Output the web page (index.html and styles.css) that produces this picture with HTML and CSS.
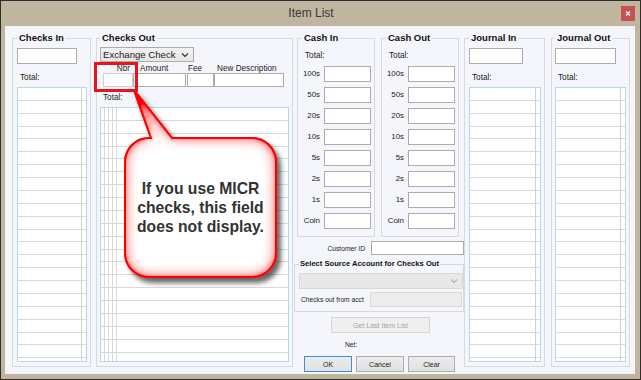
FILE: index.html
```html
<!DOCTYPE html>
<html lang="en">
<head>
    <meta charset="UTF-8">
    <title>Item List</title>
    <link rel="stylesheet" href="styles.css">
</head>
<body>
    <div class="window">
        <div class="titlebar">
            <span class="title">Item List</span>
            <span class="close">
                <svg width="14" height="15" viewBox="0 0 14 15"><path d="M5 5.5 L9 9.5 M9 5.5 L5 9.5" stroke="#fff" stroke-width="1.3"/></svg>
            </span>
        </div>

        <div class="client">
            <fieldset class="group checks-in">
                <legend>Checks In</legend>
                <div class="input in-box"></div>
                <div class="label total">Total:</div>
                <div class="list"></div>
            </fieldset>

            <fieldset class="group checks-out">
                <legend>Checks Out</legend>
                <div class="combo">
                    <span>Exchange Check</span>
                    <svg width="8" height="6" viewBox="0 0 8 6"><path d="M1 1.5 L4 4.5 L7 1.5" fill="none" stroke="#333" stroke-width="1.2"/></svg>
                </div>
                <div class="entry">
                    <div class="field f-nbr"><span class="label">Nbr</span><div class="input soft"></div></div>
                    <div class="field f-amount"><span class="label">Amount</span><div class="input"></div></div>
                    <div class="field f-fee"><span class="label">Fee</span><div class="input"></div></div>
                    <div class="field f-desc"><span class="label">New Description</span><div class="input"></div></div>
                </div>
                <div class="label total out-total">Total:</div>
                <div class="grid"></div>
            </fieldset>

            <div class="middle">
                <div class="cash-row">
                    <fieldset class="group cash">
                        <legend>Cash In</legend>
                        <div class="label cash-total">Total:</div>
                        <div class="denom"><span>100s</span><div class="input"></div></div>
                        <div class="denom"><span>50s</span><div class="input"></div></div>
                        <div class="denom"><span>20s</span><div class="input"></div></div>
                        <div class="denom"><span>10s</span><div class="input"></div></div>
                        <div class="denom"><span>5s</span><div class="input"></div></div>
                        <div class="denom"><span>2s</span><div class="input"></div></div>
                        <div class="denom"><span>1s</span><div class="input"></div></div>
                        <div class="denom"><span>Coin</span><div class="input"></div></div>
                    </fieldset>
                    <fieldset class="group cash">
                        <legend>Cash Out</legend>
                        <div class="label cash-total">Total:</div>
                        <div class="denom"><span>100s</span><div class="input"></div></div>
                        <div class="denom"><span>50s</span><div class="input"></div></div>
                        <div class="denom"><span>20s</span><div class="input"></div></div>
                        <div class="denom"><span>10s</span><div class="input"></div></div>
                        <div class="denom"><span>5s</span><div class="input"></div></div>
                        <div class="denom"><span>2s</span><div class="input"></div></div>
                        <div class="denom"><span>1s</span><div class="input"></div></div>
                        <div class="denom"><span>Coin</span><div class="input"></div></div>
                    </fieldset>
                </div>

                <div class="customer">
                    <span class="small">Customer ID</span>
                    <div class="input customer-box"></div>
                </div>

                <fieldset class="group source">
                    <legend>Select Source Account for Checks Out</legend>
                    <div class="combo disabled">
                        <svg width="8" height="6" viewBox="0 0 8 6"><path d="M1 1.5 L4 4.5 L7 1.5" fill="none" stroke="#b5b5b5" stroke-width="1.2"/></svg>
                    </div>
                    <div class="acct">
                        <span class="small">Checks out from acct</span>
                        <div class="input disabled acct-box"></div>
                    </div>
                </fieldset>

                <div class="btn btn-disabled get-last">Get Last Item List</div>
                <div class="small net">Net:</div>
                <div class="buttons">
                    <div class="btn btn-default">OK</div>
                    <div class="btn">Cancel</div>
                    <div class="btn btn-clear">Clear</div>
                </div>
            </div>

            <fieldset class="group journal journal-in">
                <legend>Journal In</legend>
                <div class="input j-box"></div>
                <div class="label total">Total:</div>
                <div class="list"></div>
            </fieldset>

            <fieldset class="group journal journal-out">
                <legend>Journal Out</legend>
                <div class="input j-box"></div>
                <div class="label total">Total:</div>
                <div class="list"></div>
            </fieldset>
        </div>

        <!-- callout annotation drawn over the form -->
        <svg class="annotation" width="641" height="380" viewBox="0 0 641 380">
            <defs>
                <filter id="bubble" x="-15%" y="-10%" width="135%" height="125%">
                    <feGaussianBlur in="SourceAlpha" stdDeviation="2.5" result="sb"/>
                    <feOffset in="sb" dx="4" dy="5" result="so"/>
                    <feFlood flood-color="#000" flood-opacity="0.6"/>
                    <feComposite in2="so" operator="in" result="shadow"/>
                    <feComponentTransfer in="SourceAlpha" result="inv">
                        <feFuncA type="table" tableValues="1 0"/>
                    </feComponentTransfer>
                    <feGaussianBlur in="inv" stdDeviation="7" result="ib0"/>
                    <feComponentTransfer in="ib0" result="ib">
                        <feFuncA type="linear" slope="1.7"/>
                    </feComponentTransfer>
                    <feFlood flood-color="#ff0000"/>
                    <feComposite in2="ib" operator="in" result="glow"/>
                    <feComposite in="glow" in2="SourceAlpha" operator="in" result="inner"/>
                    <feMerge>
                        <feMergeNode in="shadow"/>
                        <feMergeNode in="SourceGraphic"/>
                        <feMergeNode in="inner"/>
                    </feMerge>
                </filter>
            </defs>
            <path filter="url(#bubble)" fill="#fff" stroke="#f00" stroke-width="2"
                  d="M151 138 L134 90 L172 138 H252 A24 24 0 0 1 276 162 V253 A24 24 0 0 1 252 277 H149 A24 24 0 0 1 125 253 V162 A24 24 0 0 1 149 138 Z"/>
            <rect x="95.5" y="63.5" width="41" height="27" fill="none" stroke="#e8141c" stroke-width="3"/>
        </svg>
        <div class="callout-text">If you use MICR<br>checks, this field<br>does not display.</div>
    </div>
</body>
</html>
```

FILE: styles.css
```css
* {
    box-sizing: border-box;
}
body {
    margin: 0;
    font-family: "Liberation Sans", Arial, sans-serif;
    font-size: 8.2px;
    color: #1c1c1c;
}
.window {
    position: relative;
    width: 641px;
    height: 380px;
    border: 1px solid #2e2e2e;
    background-color: #c0b59e;
    display: flex;
    flex-direction: column;
}
.titlebar {
    height: 25px;
    display: flex;
    align-items: flex-start;
}
.title {
    flex: 1;
    text-align: center;
    font-size: 12px;
    line-height: 25px;
    color: #383838;
}
.close {
    width: 14px;
    height: 15px;
    margin: 5px 5px 0 0;
    background-color: #c75050;
    display: flex;
}
.client {
    height: 348px;
    margin: 0 5px 5px 4px;
    padding: 6px 0 0 7px;
    background-color: #f4f6fb;
    display: flex;
    align-items: flex-start;
}

/* group boxes */
.group {
    margin: 0;
    min-width: 0;
    border: 1px solid #d6dae0;
    padding: 0 3px 4px 4px;
}
.group legend {
    padding: 0 2px;
    font-size: 9.5px;
    font-weight: bold;
    line-height: 12px;
    color: #111;
}
.label {
    display: block;
    line-height: 12px;
}
.total {
    margin-top: 8px;
    padding-left: 3px;
}
.small {
    font-size: 6.7px;
    color: #222;
}
.input {
    background-color: #fff;
    border: 1px solid #acacac;
    height: 16px;
}
.input.soft {
    border-color: #cfd1d4;
}
.input.disabled {
    background-color: #ececec;
    border-color: #d9d9d9;
}

/* list boxes */
.list {
    margin-top: 3px;
    height: 275px;
    border: 1px solid #b6d8ea;
    background-color: #fff;
    background-image:
        linear-gradient(to right, transparent calc(100% - 5px), #cdd3d0 calc(100% - 5px), #cdd3d0 calc(100% - 4px), transparent calc(100% - 4px)),
        repeating-linear-gradient(to bottom, transparent 0, transparent 11.87px, #d9d9d9 11.87px, #d9d9d9 12.87px);
}

/* checks in */
.checks-in {
    width: 79px;
}
.in-box {
    margin-top: 4px;
    width: 60px;
}

/* checks out */
.checks-out {
    width: 197px;
    margin-left: 5px;
    padding-left: 3px;
}
.combo {
    margin-top: 3px;
    width: 94px;
    height: 15px;
    border: 1px solid #acacac;
    background: linear-gradient(#f2f2f2, #e6e6e6);
    display: flex;
    align-items: center;
    justify-content: space-between;
    padding: 0 4px 0 2px;
    font-size: 9.6px;
}
.entry {
    margin-top: 3px;
    display: flex;
}
.field {
    display: flex;
    flex-direction: column;
}
.field .label {
    line-height: 8px;
    height: 8px;
    white-space: nowrap;
}
.field .input {
    height: 14px;
}
.f-nbr {
    width: 30px;
    margin-left: 3px;
}
.f-nbr .label {
    text-align: right;
    padding-right: 3px;
}
.f-amount {
    width: 53px;
}
.f-amount .label {
    padding-left: 7px;
}
.f-fee {
    width: 27px;
    margin-left: 1px;
}
.f-fee .label {
    padding-left: 1px;
}
.f-desc {
    width: 70px;
}
.f-desc .label {
    padding-left: 3px;
}
.out-total {
    margin-top: 5px;
}
.grid {
    margin-top: 3px;
    height: 255px;
    border: 1px solid #b6d8ea;
    background-color: #fff;
    background-image:
        linear-gradient(to right, transparent 3px, #d8d8d8 3px 4px, transparent 4px 7px, #d8d8d8 7px 8px, transparent 8px 11px, #d8d8d8 11px 12px, transparent 12px 15px, #d8d8d8 15px 16px, transparent 16px),
        repeating-linear-gradient(to bottom, transparent 0, transparent 11.87px, #d9d9d9 11.87px, #d9d9d9 12.87px);
}

/* middle column */
.middle {
    width: 170px;
    margin-left: 1px;
    display: flex;
    flex-direction: column;
}
.cash-row {
    display: flex;
    gap: 6px;
    margin-left: 3px;
}
.cash {
    width: 78px;
    padding-bottom: 7px;
}
.cash-total {
    margin-top: 6px;
    padding-left: 3px;
    margin-bottom: 4px;
}
.denom {
    display: flex;
    gap: 4px;
    height: 16px;
    margin-bottom: 5px;
}
.denom:last-child {
    margin-bottom: 0;
}
.denom span {
    width: 18px;
    text-align: right;
    line-height: 16px;
    font-size: 7.9px;
}
.denom .input {
    width: 47px;
}
.customer {
    margin-top: 4px;
    display: flex;
    justify-content: flex-end;
    align-items: center;
    gap: 6px;
}
.customer-box {
    width: 93px;
    height: 14px;
}
.source {
    margin-top: 4px;
    padding: 0 1px 4px 4px;
}
.source legend {
    font-size: 7.6px;
    line-height: 10px;
    padding: 0 1px;
}
.combo.disabled {
    margin-top: 4px;
    width: 164px;
    height: 16px;
    background: #e8e8e8;
    border-color: #d9d9d9;
    justify-content: flex-end;
}
.acct {
    margin-top: 3px;
    display: flex;
    align-items: center;
    justify-content: space-between;
    padding-left: 2px;
}
.acct-box {
    width: 92px;
    height: 15px;
}
.btn {
    height: 16px;
    border: 1px solid #adadad;
    background: linear-gradient(#ececec, #e0e0e0);
    font-size: 7px;
    display: flex;
    align-items: center;
    justify-content: center;
    color: #1c1c1c;
}
.btn-disabled {
    background: #efefef;
    border-color: #d5d5d5;
    color: #a3a3a3;
}
.get-last {
    margin: 5px 0 0 37px;
    width: 99px;
}
.net {
    margin: 7px 0 0 51px;
    line-height: 10px;
}
.buttons {
    margin: 6px 0 0 10px;
    display: flex;
    gap: 4px;
}
.buttons .btn {
    width: 48px;
}
.buttons .btn-clear {
    width: 47px;
}
.btn-default {
    border-color: #3c8fd8;
}

/* journals */
.journal-in {
    width: 81px;
}
.journal-out {
    width: 79px;
    margin-left: 6px;
    padding-left: 3px;
}
.j-box {
    margin-top: 4px;
    width: 54px;
}
.journal-out .j-box {
    width: 61px;
}

/* annotation */
.annotation {
    position: absolute;
    left: -1px;
    top: -1px;
    pointer-events: none;
}
.callout-text {
    position: absolute;
    left: 124px;
    top: 137px;
    width: 151px;
    height: 139px;
    display: flex;
    align-items: center;
    justify-content: center;
    text-align: center;
    font-size: 15.7px;
    font-weight: bold;
    line-height: 19px;
    color: #333;
}
```
